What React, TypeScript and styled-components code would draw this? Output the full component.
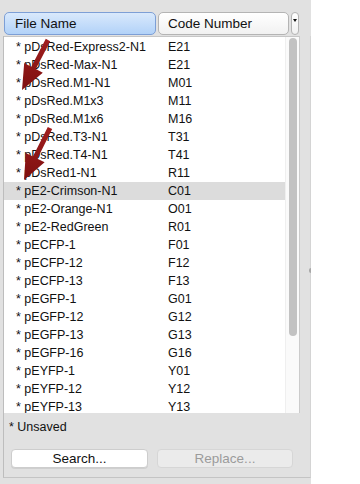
import React from "react";
import styled, { createGlobalStyle } from "styled-components";

const Global = createGlobalStyle`
  html, body { margin: 0; padding: 0; background: #ffffff; }
  body { font-family: "Liberation Sans", Arial, Helvetica, sans-serif; }
`;

const Page = styled.div`
  position: relative;
  width: 360px;
  height: 484px;
  display: flex;
  background: #ffffff;
  overflow: hidden;
`;

const Panel = styled.div`
  width: 311px;
  height: 484px;
  background: #e1e1e1;
  display: flex;
  flex-direction: column;
`;

const HeaderRow = styled.div`
  display: flex;
  gap: 2px;
  padding: 12px 0 0 4px;
  height: 23px;
`;

const HeadButton = styled.div<{ $w: number; $active?: boolean }>`
  box-sizing: border-box;
  width: ${(p) => p.$w}px;
  height: 23px;
  border-radius: 5px;
  border: 1px solid ${(p) => (p.$active ? "#7d9fd6" : "#b4b4b4")};
  background: ${(p) =>
    p.$active
      ? "linear-gradient(#d9e9fc, #b2d2f8)"
      : "linear-gradient(#ffffff, #f1f1f1)"};
  font-size: 13.5px;
  color: #111;
  display: flex;
  align-items: center;
  padding-left: ${(p) => (p.$active ? 10 : 9)}px;
`;

const DropButton = styled.div`
  box-sizing: border-box;
  width: 8px;
  height: 23px;
  border-radius: 4px;
  border: 1px solid #b4b4b4;
  background: linear-gradient(#ffffff, #f1f1f1);
  display: flex;
  justify-content: center;
  padding-top: 6px;
`;

const Tri = styled.div`
  width: 0;
  height: 0;
  border-left: 2px solid transparent;
  border-right: 2px solid transparent;
  border-top: 3px solid #111;
`;

const Box = styled.div`
  position: relative;
  margin: 1px 0 0 3px;
  height: 441px;
  border-left: 1px solid #bdbdbd;
  border-bottom: 1px solid #c4c4c4;
  border-right: 1px solid #d4d4d4;
  display: flex;
  flex-direction: column;
  &::after {
    content: "";
    position: absolute;
    right: -1px;
    top: 232px;
    width: 2px;
    height: 5px;
    border-radius: 3px 0 0 3px;
    background: #a8a8a8;
  }
`;

const ListArea = styled.div`
  width: 296px;
  height: 377px;
  border-top: 1px solid #c6c6c6;
  border-right: 1px solid #cbcbcb;
  box-sizing: border-box;
  display: flex;
  background: #ffffff;
`;

const Rows = styled.div`
  flex: 1;
  padding-top: 1px;
  overflow: hidden;
`;

const Row = styled.div<{ $sel?: boolean }>`
  display: flex;
  height: 18px;
  align-items: center;
  font-size: 12.5px;
  color: #111;
  background: ${(p) => (p.$sel ? "#dcdcdc" : "transparent")};
`;

const NameCell = styled.div`
  width: 153px;
  padding-left: 12px;
  box-sizing: border-box;
  white-space: nowrap;
`;

const CodeCell = styled.div`
  padding-left: 11px;
`;

const Scroll = styled.div`
  width: 14px;
  background: #fafafa;
  border-left: 1px solid #efefef;
  padding: 1px 0 0 3px;
  box-sizing: border-box;
`;

const Thumb = styled.div`
  width: 8px;
  height: 298px;
  border-radius: 4px;
  background: #c2c2c2;
`;

const Footer = styled.div`
  display: flex;
  flex-direction: column;
  padding: 7px 0 0 5px;
`;

const Unsaved = styled.div`
  font-size: 12.5px;
  line-height: 15px;
  color: #111;
`;

const Buttons = styled.div`
  display: flex;
  gap: 9px;
  margin: 14px 0 0 2px;
`;

const Btn = styled.div<{ $w: number; $disabled?: boolean }>`
  box-sizing: border-box;
  width: ${(p) => p.$w}px;
  height: 19px;
  border-radius: 4px;
  border: 1px solid ${(p) => (p.$disabled ? "#d6d6d6" : "#cdcdcd")};
  background: ${(p) => (p.$disabled ? "#ebebeb" : "#ffffff")};
  box-shadow: ${(p) => (p.$disabled ? "none" : "0 1px 0 rgba(0,0,0,0.08)")};
  color: ${(p) => (p.$disabled ? "#9b9b9b" : "#111")};
  font-size: 13.5px;
  display: flex;
  align-items: center;
  justify-content: center;
`;

const Overlay = styled.svg`
  position: absolute;
  left: 0;
  top: 0;
  pointer-events: none;
`;

const rows: [string, string][] = [
  ["pDsRed-Express2-N1", "E21"],
  ["pDsRed-Max-N1", "E21"],
  ["pDsRed.M1-N1", "M01"],
  ["pDsRed.M1x3", "M11"],
  ["pDsRed.M1x6", "M16"],
  ["pDsRed.T3-N1", "T31"],
  ["pDsRed.T4-N1", "T41"],
  ["pDsRed1-N1", "R11"],
  ["pE2-Crimson-N1", "C01"],
  ["pE2-Orange-N1", "O01"],
  ["pE2-RedGreen", "R01"],
  ["pECFP-1", "F01"],
  ["pECFP-12", "F12"],
  ["pECFP-13", "F13"],
  ["pEGFP-1", "G01"],
  ["pEGFP-12", "G12"],
  ["pEGFP-13", "G13"],
  ["pEGFP-16", "G16"],
  ["pEYFP-1", "Y01"],
  ["pEYFP-12", "Y12"],
  ["pEYFP-13", "Y13"],
];

function arrow(tx: number, ty: number, hx: number, hy: number, sw: number, hl: number, hw: number) {
  const dx = hx - tx;
  const dy = hy - ty;
  const len = Math.hypot(dx, dy);
  const ux = dx / len;
  const uy = dy / len;
  const nx = -uy;
  const ny = ux;
  const bx = hx - ux * hl;
  const by = hy - uy * hl;
  const pts = [
    [tx + nx * sw / 2, ty + ny * sw / 2],
    [bx + nx * sw / 2, by + ny * sw / 2],
    [bx + nx * hw / 2, by + ny * hw / 2],
    [hx, hy],
    [bx - nx * hw / 2, by - ny * hw / 2],
    [bx - nx * sw / 2, by - ny * sw / 2],
    [tx - nx * sw / 2, ty - ny * sw / 2],
  ];
  return pts.map((p) => `${p[0].toFixed(1)},${p[1].toFixed(1)}`).join(" ");
}

export default function App() {
  return (
    <>
      <Global />
      <Page>
        <Panel>
          <HeaderRow>
            <HeadButton $w={152} $active>File Name</HeadButton>
            <HeadButton $w={131}>Code Number</HeadButton>
            <DropButton>
              <Tri />
            </DropButton>
          </HeaderRow>
          <Box>
            <ListArea>
              <Rows>
                {rows.map(([n, c], i) => (
                  <Row key={n} $sel={i === 8}>
                    <NameCell>* {n}</NameCell>
                    <CodeCell>{c}</CodeCell>
                  </Row>
                ))}
              </Rows>
              <Scroll>
                <Thumb />
              </Scroll>
            </ListArea>
            <Footer>
              <Unsaved>* Unsaved</Unsaved>
              <Buttons>
                <Btn $w={137}>Search...</Btn>
                <Btn $w={136} $disabled>Replace...</Btn>
              </Buttons>
            </Footer>
          </Box>
        </Panel>
        <Overlay width="360" height="484" viewBox="0 0 360 484">
          <defs>
            <linearGradient id="ar" x1="0" y1="0" x2="0" y2="1">
              <stop offset="0" stopColor="#a01e1e" />
              <stop offset="1" stopColor="#7e1010" />
            </linearGradient>
          </defs>
          <polygon points={arrow(48, 40, 22, 90, 5, 25, 21)} fill="url(#ar)" />
          <polygon points={arrow(50, 128, 24, 180, 5, 25, 21)} fill="url(#ar)" />
        </Overlay>
      </Page>
    </>
  );
}
